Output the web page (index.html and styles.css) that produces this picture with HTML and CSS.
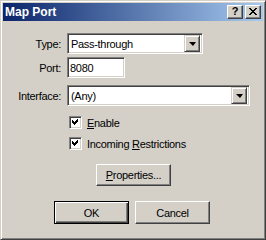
FILE: index.html
```html
<!DOCTYPE html>
<html>
<head>
    <title>Map Port</title>
    <link rel="stylesheet" href="styles.css">
</head>
<body>
    <div class="window">
        <div class="titlebar">
            <span class="title">Map Port</span>
            <div class="caption-buttons">
                <div class="cap-btn help">?</div>
                <div class="cap-btn close">
                    <svg width="8" height="7" viewBox="0 0 8 7">
                        <path d="M0 0h2v1h-2zM6 0h2v1h-2zM1 1h2v1h-2zM5 1h2v1h-2zM2 2h4v1h-4zM3 3h2v1h-2zM2 4h4v1h-4zM1 5h2v1h-2zM5 5h2v1h-2zM0 6h2v1h-2zM6 6h2v1h-2z" fill="#000"/>
                    </svg>
                </div>
            </div>
        </div>

        <form class="form">
            <div class="row row-type">
                <label class="label">Type:</label>
                <div class="combo combo-type">
                    <span class="combo-text">Pass-through</span>
                    <span class="drop-btn"><span class="arrow"></span></span>
                </div>
            </div>
            <div class="row row-port">
                <label class="label">Port:</label>
                <div class="edit edit-port">8080</div>
            </div>
            <div class="row row-iface">
                <label class="label">Interface:</label>
                <div class="combo combo-iface">
                    <span class="combo-text">(Any)</span>
                    <span class="drop-btn"><span class="arrow"></span></span>
                </div>
            </div>

            <div class="checks">
                <div class="check-row">
                    <span class="checkbox">
                        <svg width="7" height="7" viewBox="0 0 7 7"><path d="M6 0v3h-1v1h-1v1h-1v1h-1v-1h-1v-1h-1v-3h1v1h1v1h1v-1h1v-1h1v-1z" fill="#000"/></svg>
                    </span>
                    <span><u>E</u>nable</span>
                </div>
                <div class="check-row">
                    <span class="checkbox">
                        <svg width="7" height="7" viewBox="0 0 7 7"><path d="M6 0v3h-1v1h-1v1h-1v1h-1v-1h-1v-1h-1v-3h1v1h1v1h1v-1h1v-1h1v-1z" fill="#000"/></svg>
                    </span>
                    <span>Incoming <u>R</u>estrictions</span>
                </div>
            </div>

            <div class="props-row">
                <div class="button props"><u>P</u>roperties...</div>
            </div>

            <div class="actions">
                <div class="button default">OK</div>
                <div class="button">Cancel</div>
            </div>
        </form>
    </div>
</body>
</html>
```

FILE: styles.css
```css
body {
    margin: 0;
    font-family: "Liberation Sans", Arial, sans-serif;
    font-size: 11px;
    letter-spacing: -0.3px;
    color: #000;
    background: #d4d0c8;
}
.window {
    width: 266px;
    height: 240px;
    box-sizing: border-box;
    background: #d4d0c8;
    border: 1px solid;
    border-color: #d4d0c8 #404040 #404040 #d4d0c8;
    box-shadow: inset 1px 1px #fff, inset -1px -1px #808080;
    padding: 2px;
}
.titlebar {
    height: 18px;
    display: flex;
    align-items: center;
    justify-content: space-between;
    background: linear-gradient(to right, #0a246a, #a6caf0);
    padding: 0 2px;
}
.title {
    color: #fff;
    font-weight: bold;
    font-size: 12px;
    letter-spacing: 0;
}
.caption-buttons {
    display: flex;
    gap: 2px;
}
.cap-btn {
    width: 16px;
    height: 14px;
    box-sizing: border-box;
    background: #d4d0c8;
    border: 1px solid;
    border-color: #fff #404040 #404040 #fff;
    box-shadow: inset -1px -1px #808080;
    display: flex;
    align-items: center;
    justify-content: center;
}
.help {
    font-weight: bold;
    font-size: 11px;
    line-height: 1;
    padding-bottom: 1px;
}
.close svg {
    margin-bottom: 1px;
}
.form {
    margin: 0;
    padding-top: 12px;
}
.row {
    display: grid;
    grid-template-columns: 58px auto;
    column-gap: 6px;
    align-items: center;
    justify-content: start;
}
.label {
    text-align: right;
}
.row-port {
    margin-top: 3px;
}
.row-iface {
    margin-top: 7px;
}
.combo, .edit {
    height: 21px;
    box-sizing: border-box;
    background: #fff;
    border: 1px solid;
    border-color: #808080 #fff #fff #808080;
    box-shadow: inset 1px 1px #404040, inset -1px -1px #d4d0c8;
    display: flex;
    align-items: center;
    padding: 2px;
}
.combo-type {
    width: 136px;
}
.combo-iface {
    width: 183px;
}
.edit-port {
    width: 58px;
    padding-left: 2px;
}
.combo-text {
    flex: 1;
    padding-left: 1px;
}
.drop-btn {
    width: 16px;
    height: 17px;
    box-sizing: border-box;
    background: #d4d0c8;
    border: 1px solid;
    border-color: #d4d0c8 #404040 #404040 #d4d0c8;
    box-shadow: inset 1px 1px #fff, inset -1px -1px #808080;
    display: flex;
    align-items: center;
    justify-content: center;
}
.arrow {
    width: 0;
    height: 0;
    border-left: 4px solid transparent;
    border-right: 3px solid transparent;
    border-top: 4px solid #000;
}
.checks {
    padding-left: 66px;
    margin-top: 10px;
    display: flex;
    flex-direction: column;
    gap: 8px;
}
.check-row {
    display: flex;
    align-items: center;
    gap: 5px;
    height: 13px;
}
.checkbox {
    width: 13px;
    height: 13px;
    box-sizing: border-box;
    background: #fff;
    border: 1px solid;
    border-color: #808080 #fff #fff #808080;
    box-shadow: inset 1px 1px #404040, inset -1px -1px #d4d0c8;
    display: flex;
    align-items: center;
    justify-content: center;
}
.props-row {
    padding-left: 93px;
    margin-top: 14px;
}
.button {
    width: 75px;
    height: 23px;
    box-sizing: border-box;
    background: #d4d0c8;
    border: 1px solid;
    border-color: #fff #404040 #404040 #fff;
    box-shadow: inset -1px -1px #808080;
    display: flex;
    align-items: center;
    justify-content: center;
}
.props {
    height: 22px;
}
.actions {
    display: flex;
    gap: 6px;
    padding-left: 51px;
    margin-top: 15px;
}
.button.default {
    border: 1px solid #000;
    box-shadow: inset 1px 1px #fff, inset -1px -1px #404040, inset -2px -2px #808080;
}
```
